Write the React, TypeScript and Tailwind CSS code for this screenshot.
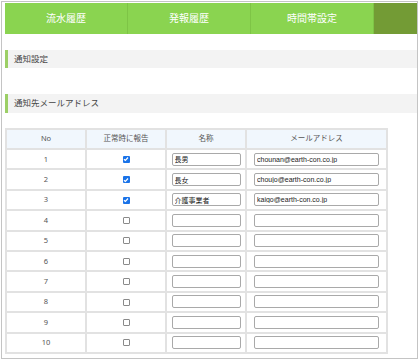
import React from "react";

type Row = { no: number; report: boolean; name: string; mail: string };

const rows: Row[] = [
  { no: 1, report: true, name: "長男", mail: "chounan@earth-con.co.jp" },
  { no: 2, report: true, name: "長女", mail: "choujo@earth-con.co.jp" },
  { no: 3, report: true, name: "介護事業者", mail: "kaigo@earth-con.co.jp" },
  { no: 4, report: false, name: "", mail: "" },
  { no: 5, report: false, name: "", mail: "" },
  { no: 6, report: false, name: "", mail: "" },
  { no: 7, report: false, name: "", mail: "" },
  { no: 8, report: false, name: "", mail: "" },
  { no: 9, report: false, name: "", mail: "" },
  { no: 10, report: false, name: "", mail: "" },
];

const tabs = ["流水履歴", "発報履歴", "時間帯設定"];

const Check = ({ on }: { on: boolean }) =>
  on ? (
    <span className="inline-flex w-[7px] h-[7px] rounded-[1px] bg-[#1a73e8] items-center justify-center align-middle">
      <svg width="6" height="6" viewBox="0 0 6 6">
        <path d="M1 3.2 L2.4 4.5 L5 1.5" stroke="#fff" strokeWidth="1.2" fill="none" />
      </svg>
    </span>
  ) : (
    <span className="inline-block w-[7px] h-[7px] rounded-[1px] border border-[#8a8a8a] bg-white align-middle" />
  );

const SectionTitle = ({ label, h }: { label: string; h: string }) => (
  <div className={`flex items-center bg-[#f3f3f3] border-l-[3px] border-[#9ccf66] pl-[6px] text-[8.5px] text-[#444] ${h}`}>
    {label}
  </div>
);

export default function App() {
  return (
    <div
      className="w-[419px] h-[360px] bg-white"
      style={{ fontFamily: '"Noto Sans", "Noto Sans CJK JP", sans-serif' }}
    >
      <div className="ml-[1px] mt-[1px] w-[417px] h-[358px] border border-[#c4c4c4] pl-[3px] pt-[1px]">
        <nav className="flex h-[31px]">
          {tabs.map((t) => (
            <div
              key={t}
              className="w-[123px] flex items-center justify-center bg-[#8ad450] border-r border-[#7ec446] text-white text-[10px]"
            >
              {t}
            </div>
          ))}
          <div className="flex-1 bg-[#739b35]" />
        </nav>

        <div className="mt-[16px]">
          <SectionTitle label="通知設定" h="h-[18px]" />
        </div>
        <div className="mt-[26px]">
          <SectionTitle label="通知先メールアドレス" h="h-[19px]" />
        </div>

        <table className="mt-[15px] w-[381px] table-fixed border-collapse text-[7.5px] text-[#555]">
          <colgroup>
            <col className="w-[80px]" />
            <col className="w-[80px]" />
            <col className="w-[80px]" />
            <col className="w-[141px]" />
          </colgroup>
          <thead>
            <tr className="h-[20px] bg-[#f1f7fd]">
              {["No", "正常時に報告", "名称", "メールアドレス"].map((c) => (
                <th key={c} className="border-2 border-[#e2e2e2] font-normal p-0">
                  {c}
                </th>
              ))}
            </tr>
          </thead>
          <tbody>
            {rows.map((r) => (
              <tr key={r.no} className="h-[20.4px]">
                <td className="border-2 border-[#e2e2e2] text-center p-0">{r.no}</td>
                <td className="border-2 border-[#e2e2e2] text-center p-0 leading-none">
                  <Check on={r.report} />
                </td>
                <td className="border-2 border-[#e2e2e2] text-center p-0 leading-none">
                  <input
                    readOnly
                    value={r.name}
                    className="w-[69px] h-[13px] border border-[#a9a9a9] rounded-[2px] px-[2px] text-left text-[7px] text-[#222] align-middle"
                  />
                </td>
                <td className="border-2 border-[#e2e2e2] text-center p-0 leading-none">
                  <input
                    readOnly
                    value={r.mail}
                    className="w-[125px] h-[13px] border border-[#a9a9a9] rounded-[2px] px-[2px] text-left text-[7px] text-[#222] align-middle font-['Liberation_Sans',sans-serif]"
                  />
                </td>
              </tr>
            ))}
          </tbody>
        </table>
      </div>
    </div>
  );
}
